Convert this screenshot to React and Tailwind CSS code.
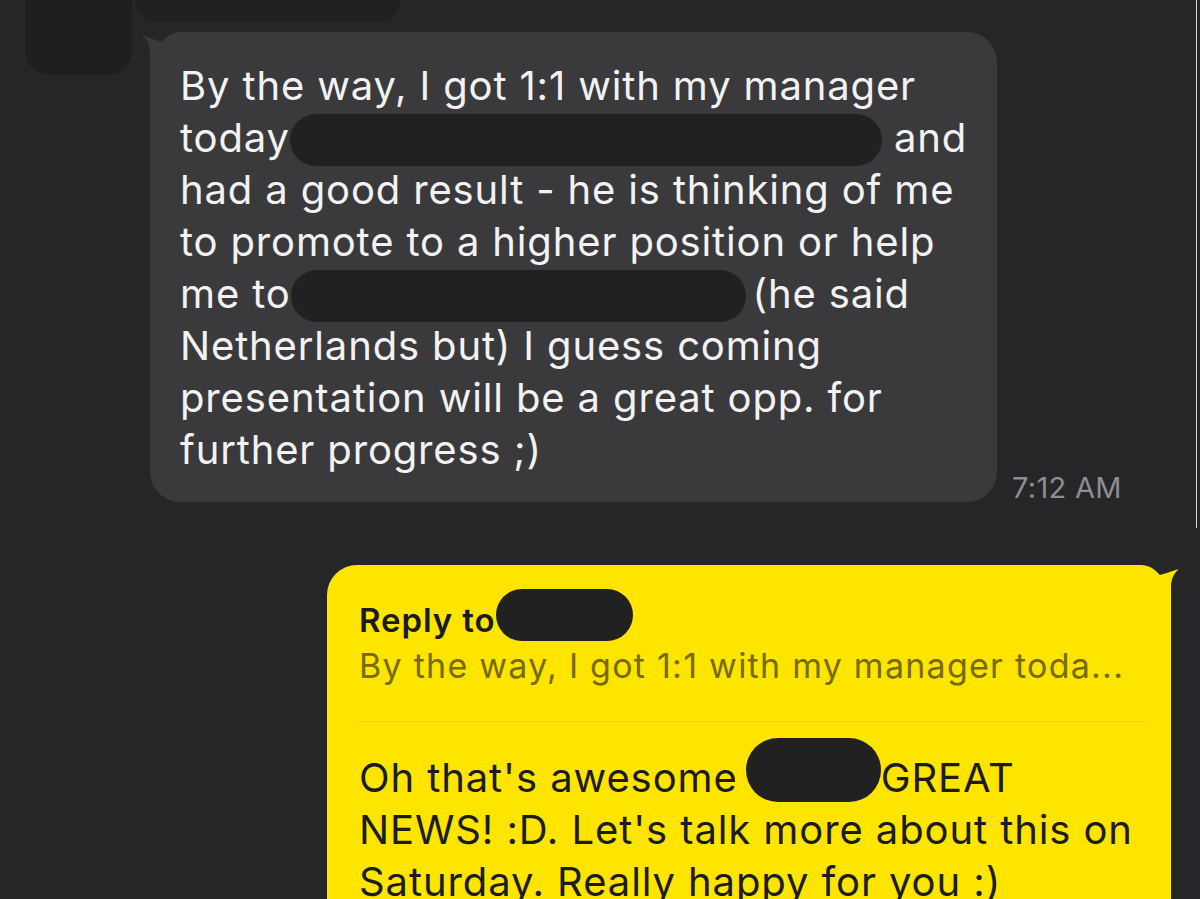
export default function App() {
  return (
    <div className="relative w-[1200px] h-[899px] overflow-hidden bg-[#262628] font-['Inter',sans-serif]">
      {/* thin screenshot seam on the right edge */}
      <div className="absolute left-[1196px] top-0 w-px h-[528px] bg-[#d8d8d8]" />

      <div className="flex">
        {/* avatar placeholder */}
        <div className="w-[150px] shrink-0">
          <div className="ml-[25px] -mt-[40px] w-[107px] h-[115px] rounded-[24px] bg-[#1f1f21]" />
        </div>

        <div className="flex flex-col">
          {/* previous (cut off) item */}
          <div className="-ml-[15px] -mt-[30px] w-[265px] h-[52px] rounded-[22px] bg-[#202022]" />

          <div className="flex items-end mt-[10px]">
            <IncomingBubble />
            <div className="ml-[15px] text-[29px] leading-[29px] tracking-[0.3px] text-[#8d8d92] whitespace-nowrap">
              7:12 AM
            </div>
          </div>
        </div>
      </div>

      <div className="flex justify-end mt-[63px] pr-[29px]">
        <OutgoingBubble />
      </div>
    </div>
  );
}

function Redact({ className }) {
  return <span className={`inline-block rounded-full bg-[#212121] ${className}`} />;
}

function IncomingBubble() {
  return (
    <div className="relative w-[847px] h-[470px] rounded-[30px] rounded-tl-[40px] bg-[#3a3a3c] pl-[30px] pt-[28px] text-[40px] leading-[52px] tracking-[0.85px] text-[#f2f2f2] whitespace-nowrap">
      <svg className="absolute -left-[9px] -top-[1px] w-[50px] h-[45px]" viewBox="0 0 50 45">
        <path
          d="M9 45 L9 22 C9 14 6 8 1 4 C8 6 16 10 21 11 C25 6 30 1 40 1 L50 1 L50 45 Z"
          fill="#3a3a3c"
        />
      </svg>
      <div className="relative">By the way, I got 1:1 with my manager</div>
      <div>
        today
        <Redact className="w-[592px] h-[52px] align-top mt-[2px] -mb-[2px]" /> and
      </div>
      <div>had a good result - he is thinking of me</div>
      <div>to promote to a higher position or help</div>
      <div>
        me to
        <Redact className="w-[455px] h-[52px] align-top mt-[2px] -mb-[2px] mr-[7px]" />
        (he said
      </div>
      <div>Netherlands but) I guess coming</div>
      <div>presentation will be a great opp. for</div>
      <div>further progress ;)</div>
    </div>
  );
}

function OutgoingBubble() {
  return (
    <div className="relative w-[844px] h-[400px] rounded-[30px] rounded-tr-[40px] bg-[#fee500] pl-[32px] pr-[26px] pt-[24px] text-[#1c1c1c] whitespace-nowrap">
      <svg className="absolute -right-[9px] top-0 w-[50px] h-[45px]" viewBox="0 0 50 45">
        <path
          d="M41 45 L41 22 C41 14 44 8 49 4 C42 6 34 9 30 10 C26 6 21 0 10 0 L0 0 L0 45 Z"
          fill="#fee500"
        />
      </svg>

      <div className="relative flex items-start h-[52px]">
        <span className="pt-[11px] text-[33px] leading-[40px] tracking-[0.9px] font-semibold text-[#1b1b1b]">Reply to</span>
        <Redact className="ml-[1px] w-[137px] h-[52px]" />
      </div>
      <div className="mt-[3px] text-[34px] leading-[44px] tracking-[1.25px] text-[#776a00]">
        By the way, I got 1:1 with my manager toda...
      </div>
      <div className="mt-[33px] h-px bg-[#ecd400]" />

      <div className="mt-[30px] text-[40px] leading-[52px] tracking-[0.9px]">
        <div>
          Oh that's awesome
          <Redact className="ml-[8px] w-[135px] h-[64px] align-top -mt-[14px] mb-[2px]" />
          GREAT
        </div>
        <div>NEWS! :D. Let's talk more about this on</div>
        <div>Saturday. Really happy for you :)</div>
      </div>
    </div>
  );
}
